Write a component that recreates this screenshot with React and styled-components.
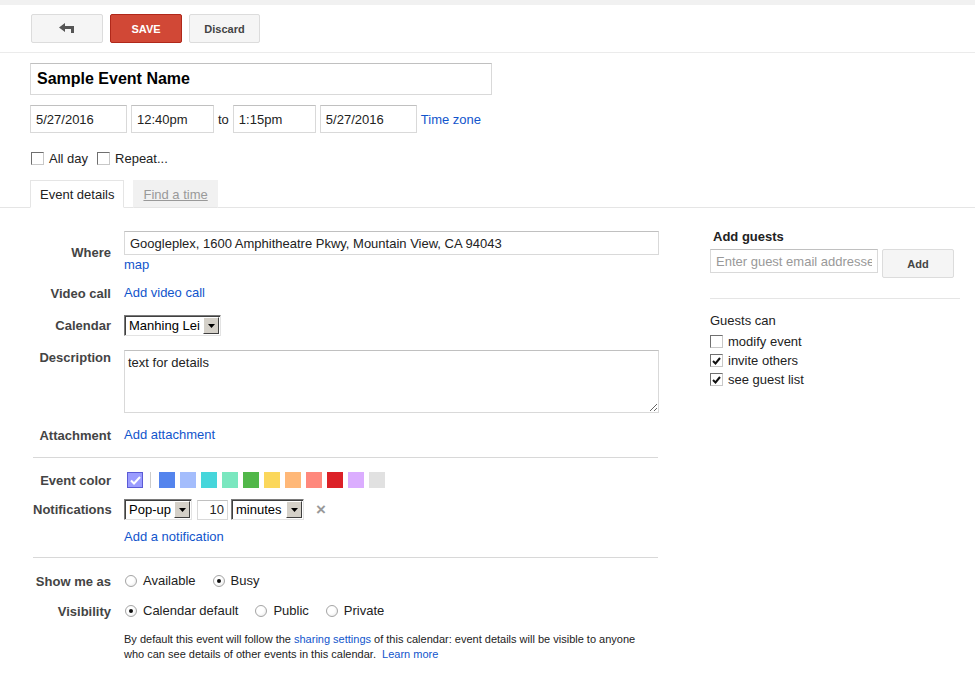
import styled, { createGlobalStyle } from "styled-components";

const GlobalStyle = createGlobalStyle`
  body {
    margin: 0;
    background: #fff;
    color: #222;
    font-family: "Liberation Sans", Arial, sans-serif;
    font-size: 13px;
  }
  * { box-sizing: border-box; }
`;

const TopStrip = styled.div`
  height: 5px;
  background: #f1f1f1;
`;

const Toolbar = styled.div`
  display: flex;
  gap: 7px;
  height: 48px;
  padding: 9px 0 0 31px;
  border-bottom: 1px solid #ebebeb;
`;

const ToolButton = styled.button`
  width: ${(p) => p.$w || 72}px;
  height: 29px;
  border-radius: 2px;
  border: 1px solid ${(p) => (p.$primary ? "#b0281a" : "#dcdcdc")};
  background: ${(p) => (p.$primary ? "#d14836" : "#f5f5f5")};
  color: ${(p) => (p.$primary ? "#fff" : "#444")};
  font-family: inherit;
  font-size: 11px;
  font-weight: bold;
  text-transform: ${(p) => (p.$primary ? "uppercase" : "none")};
  display: flex;
  align-items: center;
  justify-content: center;
  padding: 0;
`;

const Header = styled.div`
  padding: 10px 0 0 30px;
`;

const TitleInput = styled.input`
  display: block;
  width: 462px;
  height: 32px;
  border: 1px solid #d9d9d9;
  border-top-color: #c0c0c0;
  padding: 0 6px;
  font-family: inherit;
  font-size: 16px;
  font-weight: bold;
  color: #000;
  outline: none;
`;

const DateRow = styled.div`
  display: flex;
  align-items: center;
  gap: 4px;
  margin-top: 10px;
`;

const TextBox = styled.input`
  width: ${(p) => p.$w}px;
  height: ${(p) => p.$h || 28}px;
  border: 1px solid #d9d9d9;
  border-top-color: #c0c0c0;
  padding: 0 ${(p) => (p.$right ? 3 : 5)}px;
  font-family: inherit;
  font-size: 13px;
  color: #222;
  text-align: ${(p) => (p.$right ? "right" : "left")};
  outline: none;
  &::placeholder {
    color: #999;
  }
`;

const To = styled.span`
  margin: 0;
`;

const Link = styled.a`
  color: #15c;
  text-decoration: none;
  cursor: pointer;
`;

const OptionsRow = styled.div`
  display: flex;
  align-items: center;
  margin-top: 18px;
  height: 14px;
  padding-left: 1px;
`;

const CheckLabel = styled.label`
  display: inline-flex;
  align-items: center;
  gap: 5px;
  margin-right: 9px;
  line-height: 19px;
`;

const Box = styled.span`
  width: 13px;
  height: 13px;
  border: 1px solid;
  border-color: #6f6f6f #c8c8c8 #c8c8c8 #6f6f6f;
  background: #fff;
  display: inline-flex;
  align-items: center;
  justify-content: center;
`;

const Tabs = styled.div`
  display: flex;
  gap: 9px;
  margin-top: 15px;
  padding-left: 30px;
  border-bottom: 1px solid #e5e5e5;
`;

const Tab = styled.div`
  height: 28px;
  padding: 0 9px;
  margin-bottom: -1px;
  display: flex;
  align-items: center;
  border: 1px solid ${(p) => (p.$active ? "#e5e5e5" : "#f1f1f1")};
  border-bottom-color: ${(p) => (p.$active ? "#fff" : "#e5e5e5")};
  background: ${(p) => (p.$active ? "#fff" : "#f1f1f1")};
  color: ${(p) => (p.$active ? "#222" : "#999")};
  text-decoration: ${(p) => (p.$active ? "none" : "underline")};
`;

const Details = styled.div`
  display: flex;
  padding: 21px 0 0 33px;
`;

const LeftPanel = styled.div`
  width: 625px;
  padding-top: 2px;
`;

const Row = styled.div`
  display: grid;
  grid-template-columns: 78px 1fr;
  column-gap: 13px;
  align-items: ${(p) => (p.$top ? "start" : "center")};
  margin-top: ${(p) => p.$mt || 0}px;
  min-height: 18px;
`;

const Label = styled.div`
  text-align: right;
  font-weight: bold;
  color: #444;
  line-height: 15px;
  white-space: nowrap;
`;

const Field = styled.div`
  display: flex;
  flex-direction: ${(p) => (p.$col ? "column" : "row")};
  align-items: ${(p) => (p.$col ? "flex-start" : "center")};
  line-height: 18px;
`;

const MapLink = styled(Link)`
  line-height: 17px;
  margin-top: 1px;
`;

const Select = styled.div`
  width: ${(p) => p.$w}px;
  height: 21px;
  display: flex;
  align-items: center;
  justify-content: space-between;
  border: 1px solid;
  border-color: #7a7a7a #e3e3e3 #e3e3e3 #7a7a7a;
  box-shadow: inset 1px 1px 0 #404040;
  padding: 0 1px 0 4px;
  background: #fff;
  color: #000;
`;

const SelectArrow = styled.span`
  width: 16px;
  height: 17px;
  background: #d4d0c8;
  border: 1px solid;
  border-color: #fff #404040 #404040 #fff;
  display: flex;
  align-items: center;
  justify-content: center;
`;

const DescArea = styled.textarea`
  width: 535px;
  height: 63px;
  border: 1px solid #d9d9d9;
  border-top-color: #c0c0c0;
  padding: 4px 3px;
  font-family: inherit;
  font-size: 13px;
  color: #222;
  outline: none;
  resize: both;
`;

const Divider = styled.div`
  height: 1px;
  background: #d8d8d8;
  margin-top: ${(p) => p.$mt}px;
`;

const Swatch = styled.span`
  width: 16px;
  height: 16px;
  background: ${(p) => p.$c};
  border: ${(p) => (p.$checked ? "1px solid #5b5bd6" : "none")};
  display: inline-flex;
  align-items: center;
  justify-content: center;
  margin-right: 5px;
`;

const CheckedSwatch = styled(Swatch)`
  margin-left: 3px;
  margin-right: 6px;
`;

const SwatchSep = styled.span`
  width: 1px;
  height: 16px;
  background: #ccc;
  margin: 0 8px 0 1px;
`;

const SmallBox = styled(TextBox)`
  margin: 0 3px 0 5px;
`;

const Close = styled.span`
  color: #999;
  font-weight: bold;
  font-size: 17px;
  margin-left: 12px;
`;

const RadioLabel = styled.label`
  display: inline-flex;
  align-items: center;
  gap: 6px;
  margin-right: 16px;
  margin-left: 1px;
`;

const RadioDot = styled.span`
  width: 12px;
  height: 12px;
  border-radius: 50%;
  border: 1px solid #a5a5a5;
  background: radial-gradient(circle at 40% 40%, #fff 40%, #e4e4e4 100%);
  display: inline-flex;
  align-items: center;
  justify-content: center;
  &::after {
    content: "";
    width: 4px;
    height: 4px;
    border-radius: 50%;
    background: ${(p) => (p.$checked ? "#111" : "transparent")};
  }
`;

const Help = styled.div`
  font-size: 11px;
  line-height: 15px;
  color: #222;
`;

const RightPanel = styled.div`
  width: 250px;
  margin-left: 52px;
`;

const SideTitle = styled.div`
  font-weight: bold;
  line-height: 15px;
  padding-left: 3px;
  color: #222;
`;

const GuestRow = styled.div`
  display: flex;
  align-items: flex-start;
  gap: 4px;
  margin-top: 5px;
`;

const SideDivider = styled.div`
  height: 1px;
  background: #e5e5e5;
  margin-top: 20px;
`;

const GuestsCan = styled.div`
  margin-top: 14px;
  line-height: 16px;
  color: #222;
  font-size: 13px;
  margin-bottom: 3px;
`;

const GuestOption = styled(CheckLabel)`
  display: flex;
  margin: 0;
`;

function Checkbox({ checked }) {
  return (
    <Box>
      {checked && (
        <svg width="9" height="8" viewBox="0 0 9 8">
          <path d="M1 4 L3.5 6.5 L8 1" fill="none" stroke="#111" strokeWidth="2" />
        </svg>
      )}
    </Box>
  );
}

function Radio({ checked, children }) {
  return (
    <RadioLabel>
      <RadioDot $checked={checked} />
      {children}
    </RadioLabel>
  );
}

function Dropdown({ w, children }) {
  return (
    <Select $w={w}>
      <span>{children}</span>
      <SelectArrow>
        <svg width="7" height="4" viewBox="0 0 7 4">
          <path d="M0 0 H7 L3.5 4 Z" fill="#000" />
        </svg>
      </SelectArrow>
    </Select>
  );
}

const colorsList = [
  "#5484ed",
  "#a4bdfc",
  "#46d6db",
  "#7ae7bf",
  "#51b749",
  "#fbd75b",
  "#ffb878",
  "#ff887c",
  "#dc2127",
  "#dbadff",
  "#e1e1e1",
];

function App() {
  return (
    <>
      <GlobalStyle />
      <TopStrip />
      <Toolbar>
        <ToolButton>
          <svg width="16" height="11" viewBox="0 0 16 11">
            <path d="M0 4.5 L6 0 V3 H15 V10 H12 V6 H6 V9 Z" fill="#555" />
          </svg>
        </ToolButton>
        <ToolButton $primary>Save</ToolButton>
        <ToolButton $w={71}>Discard</ToolButton>
      </Toolbar>

      <Header>
        <TitleInput defaultValue="Sample Event Name" />
        <DateRow>
          <TextBox $w={97} defaultValue="5/27/2016" />
          <TextBox $w={83} defaultValue="12:40pm" />
          <To>to</To>
          <TextBox $w={83} defaultValue="1:15pm" />
          <TextBox $w={97} defaultValue="5/27/2016" />
          <Link>Time zone</Link>
        </DateRow>
        <OptionsRow>
          <CheckLabel>
            <Checkbox />
            All day
          </CheckLabel>
          <CheckLabel>
            <Checkbox />
            Repeat...
          </CheckLabel>
        </OptionsRow>
      </Header>

      <Tabs>
        <Tab $active>Event details</Tab>
        <Tab>Find a time</Tab>
      </Tabs>

      <Details>
        <LeftPanel>
          <Row>
            <Label>Where</Label>
            <Field $col>
              <TextBox
                $w={535}
                $h={24}
                defaultValue="Googleplex, 1600 Amphitheatre Pkwy, Mountain View, CA 94043"
              />
              <MapLink>map</MapLink>
            </Field>
          </Row>
          <Row $mt={11}>
            <Label>Video call</Label>
            <Field>
              <Link>Add video call</Link>
            </Field>
          </Row>
          <Row $mt={13}>
            <Label>Calendar</Label>
            <Field>
              <Dropdown w={97}>Manhing Lei</Dropdown>
            </Field>
          </Row>
          <Row $mt={14} $top>
            <Label>Description</Label>
            <Field>
              <DescArea defaultValue="text for details" />
            </Field>
          </Row>
          <Row $mt={13}>
            <Label>Attachment</Label>
            <Field>
              <Link>Add attachment</Link>
            </Field>
          </Row>
          <Divider $mt={13} />
          <Row $mt={13}>
            <Label>Event color</Label>
            <Field>
              <CheckedSwatch $c="#9a9cff" $checked>
                <svg width="11" height="9" viewBox="0 0 11 9">
                  <path d="M1 4.5 L4 7.5 L10 1" fill="none" stroke="#fff" strokeWidth="2" />
                </svg>
              </CheckedSwatch>
              <SwatchSep />
              {colorsList.map((c) => (
                <Swatch key={c} $c={c} />
              ))}
            </Field>
          </Row>
          <Row $mt={10}>
            <Label>Notifications</Label>
            <Field>
              <Dropdown w={68}>Pop-up</Dropdown>
              <SmallBox $w={31} $h={20} $right defaultValue="10" />
              <Dropdown w={73}>minutes</Dropdown>
              <Close>×</Close>
            </Field>
          </Row>
          <Row $mt={8}>
            <span />
            <Field>
              <Link>Add a notification</Link>
            </Field>
          </Row>
          <Divider $mt={11} />
          <Row $mt={14}>
            <Label>Show me as</Label>
            <Field>
              <Radio>Available</Radio>
              <Radio checked>Busy</Radio>
            </Field>
          </Row>
          <Row $mt={12}>
            <Label>Visibility</Label>
            <Field>
              <Radio checked>Calendar default</Radio>
              <Radio>Public</Radio>
              <Radio>Private</Radio>
            </Field>
          </Row>
          <Row $mt={12}>
            <span />
            <Help>
              By default this event will follow the <Link>sharing settings</Link> of this
              calendar: event details will be visible to anyone
              <br />
              who can see details of other events in this calendar.&nbsp; <Link>Learn more</Link>
            </Help>
          </Row>
        </LeftPanel>

        <RightPanel>
          <SideTitle>Add guests</SideTitle>
          <GuestRow>
            <TextBox $w={168} $h={24} placeholder="Enter guest email addresses" />
            <ToolButton $w={72}>Add</ToolButton>
          </GuestRow>
          <SideDivider />
          <GuestsCan>Guests can</GuestsCan>
          <GuestOption>
            <Checkbox />
            modify event
          </GuestOption>
          <GuestOption>
            <Checkbox checked />
            invite others
          </GuestOption>
          <GuestOption>
            <Checkbox checked />
            see guest list
          </GuestOption>
        </RightPanel>
      </Details>
    </>
  );
}

export default App;
